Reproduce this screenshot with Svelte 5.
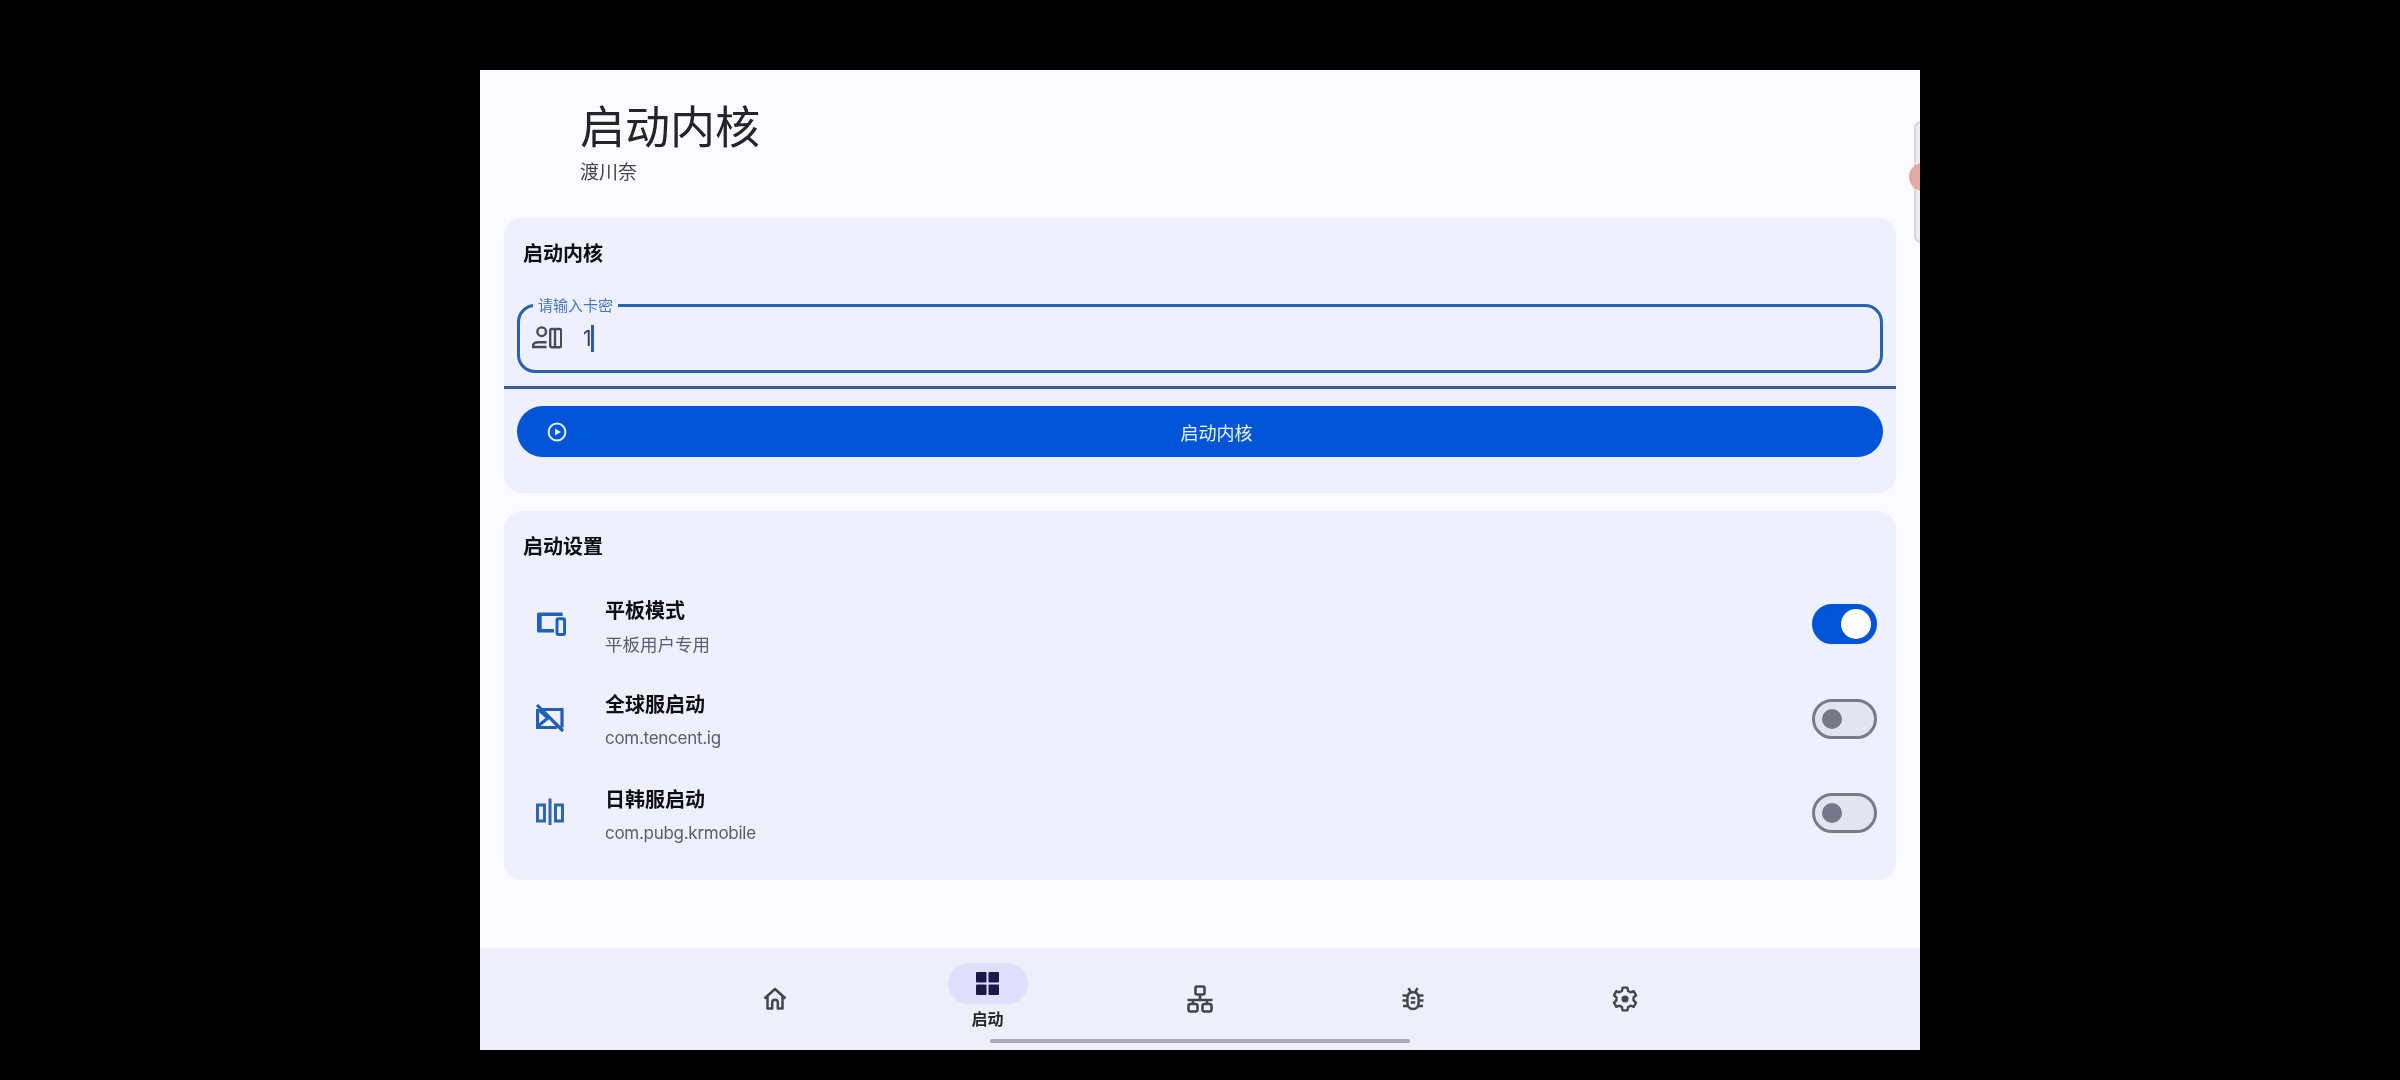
<script>
  const rows = [
    { id: 'tablet', title: '平板模式', sub: '平板用户专用', on: true, latin: false },
    { id: 'global', title: '全球服启动', sub: 'com.tencent.ig', on: false, latin: true },
    { id: 'jpkr', title: '日韩服启动', sub: 'com.pubg.krmobile', on: false, latin: true }
  ];
  const navs = ['home', 'start', 'net', 'bug', 'gear'];
</script>

<div class="stage">
  <main class="screen">
    <header class="head">
      <h1>启动内核</h1>
      <p>渡川奈</p>
    </header>

    <section class="card first">
      <h2>启动内核</h2>
      <div class="field">
        <span class="legend">请输入卡密</span>
        <svg class="field-icon" width="30" height="30" viewBox="0 0 30 30" fill="none" stroke="#4b4b5c" stroke-width="2.4">
          <circle cx="9.700" cy="7.700" r="4.300" />
          <path d="M14.500 23H1.200v-1.500c0-2 2-3.300 5-3.300h8.300" />
          <rect x="18.200" y="5" width="11" height="18.200" rx="1.600" />
          <path d="M23 5v18" />
        </svg>
        <span class="value">1</span><span class="caret"></span>
      </div>
      <div class="rule"></div>
      <button class="start">
        <svg width="20" height="20" viewBox="0 0 20 20" fill="none">
          <circle cx="10" cy="10" r="8.400" stroke="#e4eeff" stroke-width="2" />
          <path d="M8 6.400 14 10l-6 3.600z" fill="#e4eeff" />
        </svg>
        <span>启动内核</span>
      </button>
    </section>

    <section class="card second">
      <h2>启动设置</h2>
      {#each rows as row}
        <div class="row">
          <svg class="row-icon" width="30" height="30" viewBox="0 0 30 30" fill="none" stroke="#1f5fc2">
            {#if row.id === 'tablet'}
              <path d="M2.500 3.500H26.700V7H5.700V20H18V23.500H2.500A1.500 1.500 0 0 1 1 22V5A1.500 1.500 0 0 1 2.500 3.500Z" fill="#1f5fc2" stroke="none" />
              <rect x="21" y="9.700" width="7.600" height="15.800" rx="1.400" stroke-width="3" />
            {:else if row.id === 'global'}
              <path d="M6 5.500h20v18M21 23.500H1.500V5" stroke-width="3.200" stroke="#2260b8" />
              <path d="M1 1 27 27M2 22l10-8M3 6l9 8" stroke-width="3.200" stroke="#2260b8" />
            {:else}
              <rect x="1.500" y="7" width="7" height="16" stroke-width="3" stroke="#2f66b2" />
              <rect x="19.500" y="7" width="7" height="16" stroke-width="3" stroke="#2f66b2" />
              <path d="M14 .5v26.500" stroke-width="3" stroke="#2f66b2" />
            {/if}
          </svg>
          <div class="row-text">
            <strong>{row.title}</strong>
            <small class:latin={row.latin}>{row.sub}</small>
          </div>
          <span class="toggle" class:on={row.on}><i></i></span>
        </div>
      {/each}
    </section>

    <nav class="nav">
      {#each navs as n}
        <div class="nav-item" class:active={n === 'start'}>
          {#if n === 'home'}
            <svg width="24" height="24" viewBox="0 0 24 24" fill="none" stroke="#45454f" stroke-width="2.500" stroke-linejoin="round">
              <path d="M1.500 11.500 12 2l10.500 9.500M4.500 9.500V21.500h4.700v-6a2.800 2.800 0 0 1 5.600 0v6h4.700V9.500" />
            </svg>
          {:else if n === 'start'}
            <span class="pill">
              <svg width="23" height="23" viewBox="0 0 23 23" fill="#1b1947">
                <rect width="10.500" height="10.500" rx="1" />
                <rect x="12.500" width="10.500" height="10.500" rx="1" />
                <rect y="12.500" width="10.500" height="10.500" rx="1" />
                <rect x="12.500" y="12.500" width="10.500" height="10.500" rx="1" />
              </svg>
            </span>
            <span class="nav-label">启动</span>
          {:else if n === 'net'}
            <svg width="28" height="28" viewBox="0 0 28 28" fill="none" stroke="#45454f" stroke-width="2.600">
              <rect x="9.500" y="1.500" width="9" height="8" rx="1.500" />
              <path d="M14 9.500v6M1.500 15h25M7 15v4M21 15v4" />
              <rect x="2.500" y="19" width="9" height="7.500" rx="2" />
              <rect x="16.500" y="19" width="9" height="7.500" rx="2" />
            </svg>
          {:else if n === 'bug'}
            <svg width="24" height="24" viewBox="0 0 24 24" fill="none" stroke="#45454f" stroke-width="2.500">
              <path d="M12 5.200c-3.600 0-5.600 2.500-5.600 6v4.600c0 3.500 2 6.200 5.600 6.200s5.600-2.700 5.600-6.200v-4.600c0-3.500-2-6-5.600-6Z" />
              <path d="M7.500 1.200 10 5.500M16.500 1.200 14 5.500M1.500 8.500h5M22.500 8.500h-5M1.500 13.500h5M22.500 13.500h-5M2 19h5M22 19h-5M9.800 11h4.400M9.800 15.500h4.400" />
            </svg>
          {:else}
            <svg width="26" height="26" viewBox="0 0 24 24" fill="none" stroke="#45454f" stroke-width="2.200" stroke-linejoin="round">
              <path d="M9.800 1.500h4.400l.6 3 2.300 1.300 2.900-1 2.200 3.800-2.300 2v2.800l2.300 2-2.200 3.800-2.900-1-2.300 1.300-.6 3H9.800l-.6-3-2.300-1.300-2.900 1-2.200-3.800 2.300-2v-2.800l-2.300-2 2.200-3.800 2.900 1 2.300-1.300z" />
              <circle cx="12" cy="12" r="3.300" fill="#45454f" stroke="none" />
            </svg>
          {/if}
        </div>
      {/each}
      <span class="home-bar"></span>
    </nav>

    <aside class="edge-handle"><span></span></aside>
  </main>
</div>

<style>
  :global(body) {
    margin: 0;
    background: #000;
  }
  .stage {
    width: 2400px;
    height: 1080px;
    padding: 70px 480px 30px;
    box-sizing: border-box;
    font-family: "Noto Sans CJK SC", "Noto Sans", sans-serif;
    overflow: hidden;
  }
  .screen {
    position: relative;
    width: 1440px;
    height: 980px;
    background: #fbfaff;
    display: flex;
    flex-direction: column;
    overflow: hidden;
    color: #17171f;
    filter: blur(0.5px);
  }
  .head {
    padding: 25px 0 33px 100px;
  }
  h1 {
    margin: 0;
    font-size: 45px;
    line-height: 60px;
    font-weight: 400;
    color: #24242c;
  }
  .head p {
    margin: 2px 0 0;
    font-size: 19px;
    line-height: 28px;
    color: #44444e;
  }
  .card {
    margin: 0 24px;
    background: #eef0fd;
    border-radius: 18px;
  }
  .first {
    height: 275px;
  }
  .second {
    height: 369px;
    margin-top: 18px;
  }
  h2 {
    margin: 0;
    padding: 22px 0 0 19px;
    font-size: 20px;
    line-height: 26px;
    font-weight: 700;
    color: #0e0e14;
  }
  .field {
    position: relative;
    height: 69px;
    margin: 38px 13px 0;
    box-sizing: border-box;
    border: 3px solid #2a62ae;
    border-radius: 18px;
    display: flex;
    align-items: center;
    padding-left: 12px;
  }
  .legend {
    position: absolute;
    top: -11px;
    left: 13px;
    padding: 0 5px;
    font-size: 15px;
    line-height: 18px;
    background: #eef0fd;
    color: #4277bd;
  }
  .field-icon {
    flex: none;
  }
  .value {
    margin-left: 21px;
    font-size: 21px;
    color: #3a3a48;
    font-family: "Inter", sans-serif;
  }
  .caret {
    width: 3px;
    height: 27px;
    margin-left: -1px;
    background: #2a5ca8;
  }
  .rule {
    height: 3px;
    margin-top: 13px;
    background: #3c5f9c;
  }
  .start {
    display: flex;
    align-items: center;
    width: calc(100% - 26px);
    height: 51px;
    margin: 17px 13px 0;
    padding: 0 17px 0 30px;
    border: 0;
    border-radius: 26px;
    background: #0055d6;
    color: #eef3ff;
    font: 400 18px "Noto Sans CJK SC", sans-serif;
    line-height: 48px;
  }
  .start span {
    flex: 1;
    text-align: center;
  }
  .row {
    display: flex;
    align-items: center;
    height: 94.500px;
    padding: 0 19px 0 32px;
  }
  .row:first-of-type {
    margin-top: 18px;
  }
  .row-icon {
    flex: none;
  }
  .row-text {
    flex: 1;
    margin-left: 39px;
    padding-top: 4px;
    display: flex;
    flex-direction: column;
    gap: 9px;
  }
  .row-text strong {
    font-size: 20px;
    line-height: 26px;
    font-weight: 700;
    color: #0e0e14;
  }
  .row-text small {
    font-size: 17.500px;
    line-height: 24px;
    color: #5c5c6c;
  }
  .row-text small.latin {
    font-family: "Inter", sans-serif;
    font-size: 17px;
    letter-spacing: -0.280px;
  }
  .toggle {
    width: 65px;
    height: 40px;
    box-sizing: border-box;
    border: 3px solid #7a7a8b;
    border-radius: 20px;
    background: #e3e4ef;
    display: flex;
    align-items: center;
    padding-left: 7px;
  }
  .toggle i {
    width: 20px;
    height: 20px;
    border-radius: 50%;
    background: #777789;
  }
  .toggle.on {
    border-color: #0055d6;
    background: #0055d6;
    padding-left: 26px;
  }
  .toggle.on i {
    width: 30px;
    height: 30px;
    background: #fff;
  }
  .nav {
    position: relative;
    margin-top: auto;
    height: 102px;
    background: #efeffa;
    display: flex;
    justify-content: center;
    align-items: center;
  }
  .nav-item {
    width: 212.500px;
    display: flex;
    flex-direction: column;
    align-items: center;
  }
  .nav-item.active {
    margin-bottom: 7px;
  }
  .pill {
    width: 80px;
    height: 41px;
    border-radius: 21px;
    background: #e1dffb;
    display: flex;
    align-items: center;
    justify-content: center;
  }
  .nav-label {
    margin-top: 4px;
    font-size: 16px;
    line-height: 20px;
    font-weight: 700;
    color: #24242c;
  }
  .home-bar {
    position: absolute;
    left: 510px;
    bottom: 7px;
    width: 420px;
    height: 4px;
    border-radius: 2px;
    background: #a9a9b6;
  }
  .edge-handle {
    position: absolute;
    right: -8px;
    top: 51px;
    width: 14px;
    height: 122px;
    box-sizing: border-box;
    border: 2px solid #d5d5dc;
    border-radius: 7px;
    background: #ebebf0;
  }
  .edge-handle span {
    position: absolute;
    left: -7px;
    top: 40px;
    width: 28px;
    height: 28px;
    border-radius: 50%;
    background: #e3a9a5;
  }
</style>
